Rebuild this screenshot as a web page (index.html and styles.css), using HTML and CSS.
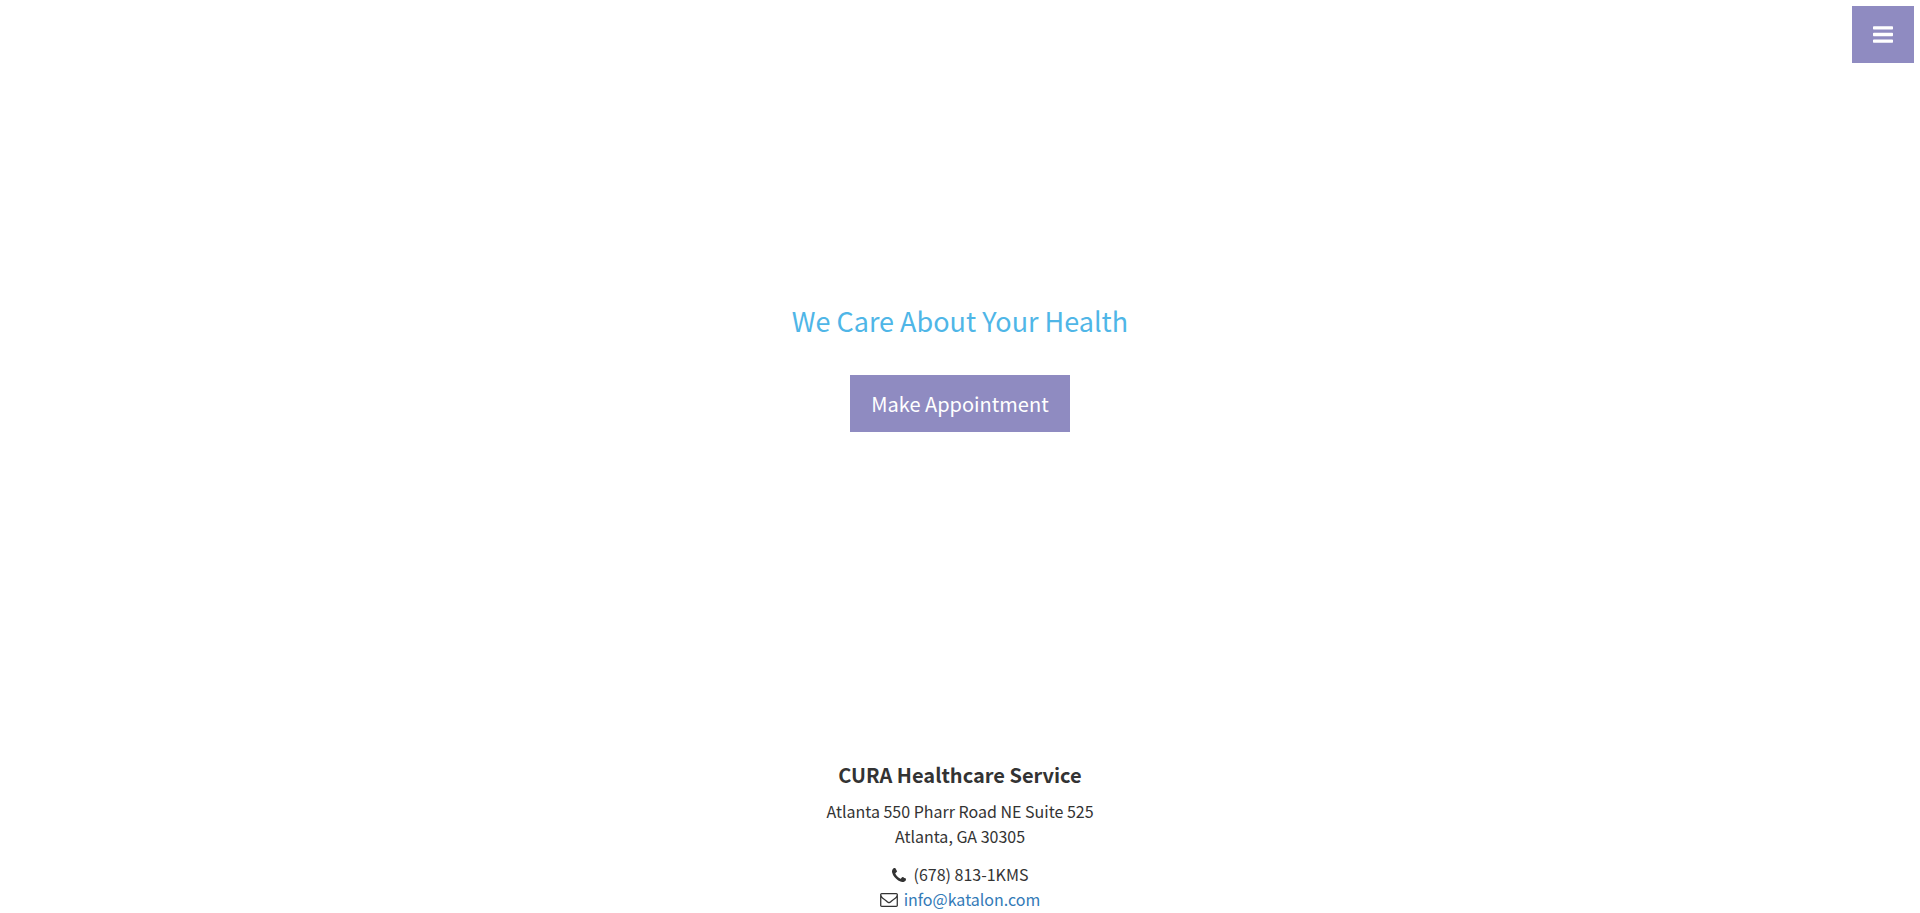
FILE: index.html
```html
<!DOCTYPE html>
<html lang="en">
<head>
<meta charset="utf-8">
<meta name="viewport" content="width=device-width, initial-scale=1">
<title>CURA Healthcare Service</title>
<link rel="stylesheet" href="styles.css">
</head>
<body>
<button class="btn menu-toggle" type="button" aria-label="Menu">
<svg class="bars" viewBox="0 0 1536 1280" aria-hidden="true"><path d="M1536 1088v128q0 26-19 45t-45 19H64q-26 0-45-19t-19-45v-128q0-26 19-45t45-19h1408q26 0 45 19t19 45zm0-512v128q0 26-19 45t-45 19H64q-26 0-45-19T0 704V576q0-26 19-45t45-19h1408q26 0 45 19t19 45zm0-512v128q0 26-19 45t-45 19H64q-26 0-45-19T0 192V64q0-26 19-45T64 0h1408q26 0 45 19t19 45z"/></svg>
</button>
<header class="hero">
<h3 class="hero-title">We Care About Your Health</h3>
<a class="btn" href="#appointment">Make Appointment</a>
</header>
<footer class="footer">
<h4 class="footer-title">CURA Healthcare Service</h4>
<p class="address">Atlanta 550 Pharr Road NE Suite 525<br>Atlanta, GA 30305</p>
<ul class="contacts">
<li class="contact contact-phone"><svg class="icon phone" viewBox="0 0 1408 1408" aria-hidden="true"><path d="M1408 1112q0 27-10 70.500t-21 68.500q-21 50-122 106-94 51-186 51-27 0-53-3.500t-57.500-12.500-47-14.500-55.500-20.500-49-18q-98-35-175-83-127-79-264-216T152 776q-48-77-83-175-3-9-18-49t-20.500-55.500-14.500-47T3.500 392 0 339q0-92 51-186Q107 52 157 31q25-11 68.500-21T296 0q14 0 21 3 18 6 53 76 11 19 30 54t35 63.500 31 53.500q3 4 17.500 25t21.500 35.500 7 28.500q0 20-28.500 50t-62 55-62 53-28.500 46q0 9 5 22.500t8.500 20.500 14 24 11.500 19q76 137 174 235t235 174q2 1 19 11.500t24 14 20.500 8.500 22.500 5q18 0 46-28.500t53-62 55-62 50-28.500q14 0 28.500 7t35.500 21.500 25 17.500q25 15 53.500 31t63.500 35 54 30q70 35 76 53 3 7 3 21z"/></svg>(678) 813-1KMS</li>
<li class="contact"><svg class="icon mail" viewBox="0 0 1792 1408" aria-hidden="true"><path d="M1664 1248V480q-32 36-69 66-268 206-426 338-51 43-83 67t-86.500 48.500T897 1024h-2q-48 0-102.500-24.500T706 951t-83-67Q465 752 197 546q-37-30-69-66v768q0 13 9.500 22.500t22.500 9.500h1472q13 0 22.500-9.500t9.500-22.500zm0-1051v-24.500l-.5-13-3-12.500-5.500-9-9-7.500-14-2.500H160q-13 0-22.500 9.500T128 160q0 168 147 284 193 152 401 317 6 5 35 29.500t46 37.500 44.500 31.500T852 887t43 9h2q20 0 43-9t50.500-27.500T1035 828t46-37.500 35-29.500q208-165 401-317 54-43 100.500-115.500T1664 197zm128-37v1088q0 66-47 113t-113 47H160q-66 0-113-47T0 1248V160Q0 94 47 47T160 0h1472q66 0 113 47t47 113z"/></svg><a class="link" href="mailto:info@katalon.com">info@katalon.com</a></li>
</ul>
</footer>
</body>
</html>
```
FILE: styles.css
```css
* {
  box-sizing: border-box;
}

html,
body {
  height: 100%;
}

body {
  margin: 0;
  display: flex;
  flex-direction: column;
  overflow: hidden;
  background: #fff;
  color: #333;
  font-family: "Noto Sans CJK SC", "Noto Sans CJK JP", "Open Sans", sans-serif;
  font-size: 16px;
  line-height: 25px;
}

.btn {
  display: inline-block;
  padding: 16px 21px;
  border: 0;
  background: #8f8bc1;
  color: #fff;
  font: inherit;
  font-size: 20px;
  line-height: 25px;
  text-decoration: none;
}

.menu-toggle {
  position: fixed;
  top: 6px;
  right: 6px;
  display: flex;
  align-items: center;
  height: 57px;
}

.bars {
  width: 20px;
  height: 17px;
  fill: #fff;
}

.hero {
  flex: 1;
  display: flex;
  flex-direction: column;
  align-items: center;
  justify-content: center;
  gap: 36px;
  padding-bottom: 28px;
}

.hero-title {
  margin: 0;
  color: #4fb6e7;
  font-size: 27px;
  font-weight: 400;
  line-height: 36px;
}

.footer {
  padding-bottom: 1px;
  text-align: center;
}

.footer-title {
  margin: 0 0 12px;
  font-size: 20px;
  font-weight: 700;
  line-height: 25px;
}

.address {
  margin: 0 0 13px;
}

.contacts {
  margin: 0;
  padding: 0;
  list-style: none;
}

.contact {
  display: flex;
  align-items: center;
  justify-content: center;
  gap: 6px;
}

.contact-phone {
  gap: 8px;
}

.icon {
  fill: #333;
}

.phone {
  width: 14px;
  height: 14px;
}

.mail {
  width: 18px;
  height: 14px;
}

.link {
  color: #337ab7;
  text-decoration: none;
}
```
